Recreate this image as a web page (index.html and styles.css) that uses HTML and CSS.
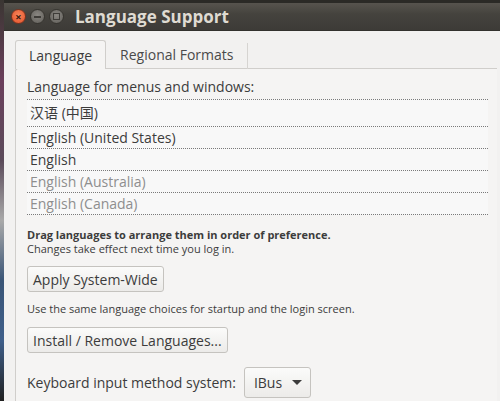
FILE: index.html
```html
<!DOCTYPE html>
<html lang="en">
<head>
    <meta charset="UTF-8">
    <title>Language Support</title>
    <link rel="stylesheet" href="styles.css">
</head>
<body>
    <div class="desktop">
        <div class="desktop-strip"></div>
        <div class="window">
            <div class="titlebar">
                <span class="wm-btn close">&#215;</span>
                <span class="wm-btn min"></span>
                <span class="wm-btn max"></span>
                <b class="title">Language Support</b>
            </div>
            <div class="window-body">
                <div class="tabs">
                    <span class="tab active">Language</span>
                    <span class="tab">Regional Formats</span>
                </div>
                <div class="tab-page">
                    <div class="label">Language for menus and windows:</div>
                    <ul class="lang-list">
                        <li class="cjk">汉语 (中国)</li>
                        <li>English (United States)</li>
                        <li>English</li>
                        <li class="off">English (Australia)</li>
                        <li class="off">English (Canada)</li>
                    </ul>
                    <p class="hint"><b>Drag languages to arrange them in order of preference.</b><br>Changes take effect next time you log in.</p>
                    <button class="btn">Apply System-Wide</button>
                    <p class="hint note">Use the same language choices for startup and the login screen.</p>
                    <button class="btn">Install / Remove Languages...</button>
                    <div class="im-row">
                        <span class="label">Keyboard input method system:</span>
                        <span class="combo">IBus <span class="arrow"></span></span>
                    </div>
                </div>
            </div>
        </div>
    </div>
</body>
</html>
```
FILE: styles.css
```css
body {
    margin: 0;
    background-color: #2c2a28;
    font-family: "Open Sans", "Noto Sans", "Noto Sans CJK SC", sans-serif;
    color: #3c3c3c;
}

.desktop {
    display: flex;
    height: 401px;
    overflow: hidden;
}

.desktop-strip {
    width: 4px;
    flex: none;
    background: linear-gradient(#3a3632 0%, #6b3f5c 20%, #5b4b5a 40%, #a9a9a9 55%, #3a5577 70%, #3f5f8a 85%, #202020 100%);
}

.window {
    flex: 1;
    display: flex;
    flex-direction: column;
    border-top: 3px solid #2b2a26;
}

.titlebar {
    height: 27px;
    flex: none;
    display: flex;
    align-items: center;
    padding-left: 7px;
    background: linear-gradient(#57544e, #45433e 40%, #3d3b37);
    border-bottom: 1px solid #33322e;
}

.wm-btn {
    width: 15px;
    height: 15px;
    border-radius: 50%;
    margin-right: 4px;
    display: inline-flex;
    align-items: center;
    justify-content: center;
    background: radial-gradient(circle at 50% 40%, #8a8782, #5f5d58);
    box-sizing: border-box;
    border: 1px solid #36342f;
    font-size: 11px;
    line-height: 1;
    color: #3a1a10;
}

.wm-btn.close {
    background: radial-gradient(circle at 50% 40%, #f7865a, #e2502a);
    border-color: #7a3420;
    font-weight: bold;
}

.wm-btn.min::after {
    content: "";
    width: 7px;
    height: 2px;
    background-color: #3e3c38;
}

.wm-btn.max::after {
    content: "";
    width: 5px;
    height: 5px;
    border: 1px solid #3e3c38;
}

.title {
    margin-left: 7px;
    font-size: 17px;
    color: #dfdbd2;
}

.window-body {
    flex: 1;
    background-color: #f2f1f0;
    padding: 9px 0 0 11px;
}

.tabs {
    display: flex;
    align-items: flex-end;
    height: 29px;
    margin-bottom: -1px;
    position: relative;
}

.tab {
    font-size: 14px;
    padding: 0 14px;
    height: 26px;
    line-height: 24px;
    color: #4a4a4a;
    border-right: 1px solid #d6d4d1;
}

.tab.active {
    padding: 0 13px;
    height: 29px;
    line-height: 30px;
    background-color: #f5f4f3;
    border: 1px solid #d0cecb;
    border-bottom: none;
    border-radius: 3px 3px 0 0;
    box-sizing: border-box;
    color: #3c3c3c;
}

.tab-page {
    border: 1px solid #d0cecb;
    border-right: none;
    border-radius: 3px 0 0 0;
    background-color: #f5f4f3;
    padding: 8px 0 20px 11px;
    margin-right: 3px;
}

.label {
    font-size: 14px;
}

.lang-list {
    list-style: none;
    margin: 3px 9px 0 0;
    padding: 0;
    background-color: #f8f8f8;
    border-top: 1px dotted #7a7a7a;
    font-size: 14px;
}

.lang-list li {
    height: 21px;
    line-height: 21px;
    padding-left: 3px;
    border-bottom: 1px dotted #7a7a7a;
}

.lang-list li.cjk {
    height: 26px;
    line-height: 26px;
}

.lang-list li.off {
    color: #8e8e8e;
}

.hint {
    font-size: 11px;
    line-height: 14px;
    margin: 13px 0 0;
}

.hint.note {
    margin: 10px 0 11px;
}

.btn {
    display: block;
    margin-top: 10px;
    font-family: inherit;
    font-size: 14px;
    color: #3c3c3c;
    height: 26px;
    padding: 0 5px;
    border: 1px solid #c5c3bf;
    border-radius: 3px;
    background: linear-gradient(#fbfbfa, #ecebe9);
}

.hint.note + .btn {
    margin-top: 0;
}

.im-row {
    display: flex;
    align-items: center;
    margin-top: 14px;
}

.combo {
    margin-left: 8px;
    display: inline-flex;
    align-items: center;
    height: 31px;
    padding: 0 8px 0 9px;
    font-size: 14px;
    border: 1px solid #c5c3bf;
    border-radius: 3px;
    background: linear-gradient(#fbfbfa, #ecebe9);
    box-sizing: border-box;
}

.arrow {
    margin-left: 10px;
    border-left: 5px solid transparent;
    border-right: 5px solid transparent;
    border-top: 5px solid #3c3c3c;
}
```
